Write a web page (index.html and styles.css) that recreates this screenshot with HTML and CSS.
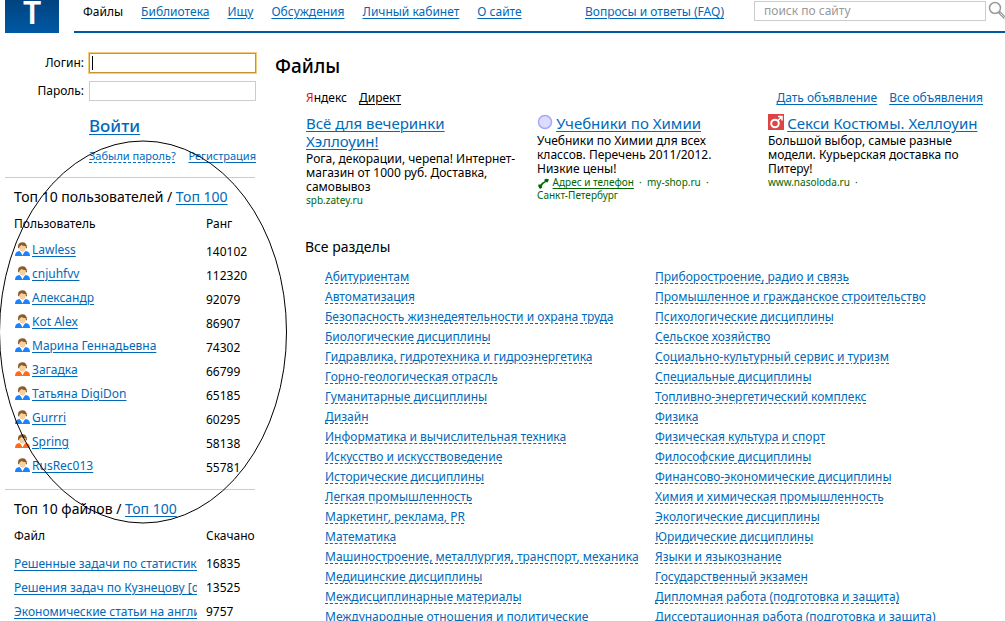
FILE: index.html
```html
<!DOCTYPE html>
<html lang="ru">
<head>
  <meta charset="UTF-8">
  <meta name="viewport" content="width=device-width, initial-scale=1.0">
  <title>Файлы</title>
  <link rel="stylesheet" href="styles.css">
</head>
<body>
  <svg class="sprite" aria-hidden="true">
    <symbol id="user" viewBox="0 0 15 14">
      <path d="M0 14 Q0 9.5 4.5 9 L7.5 12 L10.5 9 Q15 9.5 15 14 Z" fill="currentColor"/>
      <path d="M5 8.5 L7.5 13.5 L10 8.5 Z" fill="#fff"/>
      <path d="M4 4 Q4 9.5 7.5 9.8 Q11 9.5 11 4 L9.5 2.5 H5.5 Z" fill="#f6d09c"/>
      <path d="M3 6 Q2.5 0.3 7 0.2 Q12 0 12 6 L11 6.5 L10.5 4 Q8 4.5 6.5 2.8 Q6 4 4.5 4.5 L4 6.5 Z" fill="#8a5a2b"/>
    </symbol>
  </svg>

  <header class="header">
    <a class="logo" href="#">Т</a>
    <div class="topbar">
      <nav class="nav">
        <span class="current">Файлы</span>
        <a href="#">Библиотека</a>
        <a href="#">Ищу</a>
        <a href="#">Обсуждения</a>
        <a href="#">Личный кабинет</a>
        <a href="#">О сайте</a>
      </nav>
      <a class="faq" href="#">Вопросы и ответы (FAQ)</a>
      <form class="search">
        <input type="text" placeholder="поиск по сайту" aria-label="поиск по сайту">
        <button type="button" aria-label="Найти">
          <svg width="18" height="18" viewBox="0 0 18 18">
            <circle cx="7" cy="7" r="5.5" fill="#fff" stroke="#999" stroke-width="1.5"/>
            <path d="M11 11 L17 17" stroke="#999" stroke-width="3"/>
            <path d="M12 12 L17 17" stroke="#ddd" stroke-width="1"/>
          </svg>
        </button>
      </form>
    </div>
  </header>

  <div class="page">
    <aside class="sidebar">
      <form class="login">
        <label for="login">Логин:</label>
        <input type="text" id="login" class="active">
        <label for="password">Пароль:</label>
        <input type="password" id="password">
        <button type="button" class="enter">Войти</button>
        <div class="login-links">
          <a class="dashed" href="#">Забыли пароль?</a>
          <a href="#">Регистрация</a>
        </div>
      </form>

      <section class="top">
        <h2>Топ 10 пользователей / <a href="#">Топ 100</a></h2>
        <table class="users">
          <thead>
            <tr><th>Пользователь</th><th>Ранг</th></tr>
          </thead>
          <tbody>
            <tr><td><svg><use href="#user"/></svg><a href="#">Lawless</a></td><td>140102</td></tr>
            <tr><td><svg><use href="#user"/></svg><a href="#">cnjuhfvv</a></td><td>112320</td></tr>
            <tr><td><svg><use href="#user"/></svg><a href="#">Александр</a></td><td>92079</td></tr>
            <tr><td><svg><use href="#user"/></svg><a href="#">Kot Alex</a></td><td>86907</td></tr>
            <tr><td><svg><use href="#user"/></svg><a href="#">Марина Геннадьевна</a></td><td>74302</td></tr>
            <tr><td><svg class="orange"><use href="#user"/></svg><a href="#">Загадка</a></td><td>66799</td></tr>
            <tr><td><svg><use href="#user"/></svg><a href="#">Татьяна DigiDon</a></td><td>65185</td></tr>
            <tr><td><svg><use href="#user"/></svg><a href="#">Gurrri</a></td><td>60295</td></tr>
            <tr><td><svg class="orange"><use href="#user"/></svg><a href="#">Spring</a></td><td>58138</td></tr>
            <tr><td><svg><use href="#user"/></svg><a href="#">RusRec013</a></td><td>55781</td></tr>
          </tbody>
        </table>
      </section>

      <section class="top">
        <h2>Топ 10 файлов / <a href="#">Топ 100</a></h2>
        <table class="files">
          <thead>
            <tr><th>Файл</th><th>Скачано</th></tr>
          </thead>
          <tbody>
            <tr><td><a href="#">Решенные задачи по статистике</a></td><td>16835</td></tr>
            <tr><td><a href="#">Решения задач по Кузнецову [doc]</a></td><td>13525</td></tr>
            <tr><td><a href="#">Экономические статьи на англий</a></td><td>9757</td></tr>
          </tbody>
        </table>
      </section>

      <svg class="ellipse" viewBox="0 0 288 384" aria-hidden="true">
        <ellipse cx="144" cy="192" rx="143.500" ry="191" fill="none" stroke="#000" stroke-width="1"/>
      </svg>
    </aside>

    <main class="main">
      <h1>Файлы</h1>

      <section class="direct">
        <div class="direct-head">
          <span><span class="ya">Я</span>ндекс</span>
          <a class="black" href="#">Директ</a>
          <a class="give" href="#">Дать объявление</a>
          <a href="#">Все объявления</a>
        </div>
        <div class="ads">
          <div class="ad">
            <a class="ad-title" href="#">Всё для вечеринки<br>Хэллоуин!</a>
            <p>Рога, декорации, черепа! Интернет-<br>магазин от 1000 руб. Доставка,<br>самовывоз</p>
            <div class="domain">spb.zatey.ru</div>
          </div>
          <div class="ad">
            <svg class="favicon" width="16" height="16" viewBox="0 0 16 16"><circle cx="8" cy="8" r="6.5" fill="#dcdcff" stroke="#a8a8f8" stroke-width="1.5"/></svg>
            <a class="ad-title" href="#">Учебники по Химии</a>
            <p>Учебники по Химии для всех<br>классов. Перечень 2011/2012.<br>Низкие цены!</p>
            <div class="domain">
              <svg class="phone" width="13" height="11" viewBox="0 0 13 11"><path d="M3 11 Q0.5 8 1.5 6.5 L3.5 6.5 Q5 4 7.5 3.5 L7.500 1.500 Q9 0 12 1.500 L10.500 4.500 L9 4 Q6 5.500 4.800 8 L5.200 9.500 Z" fill="#006600"/></svg>
              <a href="#">Адрес и телефон</a> &nbsp;·&nbsp; my-shop.ru &nbsp;·<br>Санкт-Петербург
            </div>
          </div>
          <div class="ad">
            <svg class="favicon" width="16" height="16" viewBox="0 0 16 16"><rect width="16" height="16" fill="#dc4446"/><circle cx="7" cy="9.5" r="3.8" fill="none" stroke="#fff" stroke-width="2"/><path d="M9.5 7 L13.5 3 M10 2.5 H14 V6.5" fill="none" stroke="#fff" stroke-width="1.5"/></svg>
            <a class="ad-title" href="#">Секси Костюмы. Хеллоуин</a>
            <p>Большой выбор, самые разные<br>модели. Курьерская доставка по<br>Питеру!</p>
            <div class="domain">www.nasoloda.ru &nbsp;·</div>
          </div>
        </div>
      </section>

      <section class="sections">
        <h2>Все разделы</h2>
        <div class="columns">
          <ul>
            <li><a href="#">Абитуриентам</a></li>
            <li><a href="#">Автоматизация</a></li>
            <li><a href="#">Безопасность жизнедеятельности и охрана труда</a></li>
            <li><a href="#">Биологические дисциплины</a></li>
            <li><a href="#">Гидравлика, гидротехника и гидроэнергетика</a></li>
            <li><a href="#">Горно-геологическая отрасль</a></li>
            <li><a href="#">Гуманитарные дисциплины</a></li>
            <li><a href="#">Дизайн</a></li>
            <li><a href="#">Информатика и вычислительная техника</a></li>
            <li><a href="#">Искусство и искусствоведение</a></li>
            <li><a href="#">Исторические дисциплины</a></li>
            <li><a href="#">Легкая промышленность</a></li>
            <li><a href="#">Маркетинг, реклама, PR</a></li>
            <li><a href="#">Математика</a></li>
            <li><a href="#">Машиностроение, металлургия, транспорт, механика</a></li>
            <li><a href="#">Медицинские дисциплины</a></li>
            <li><a href="#">Междисциплинарные материалы</a></li>
            <li><a href="#">Международные отношения и политические</a></li>
          </ul>
          <ul>
            <li><a href="#">Приборостроение, радио и связь</a></li>
            <li><a href="#">Промышленное и гражданское строительство</a></li>
            <li><a href="#">Психологические дисциплины</a></li>
            <li><a href="#">Сельское хозяйство</a></li>
            <li><a href="#">Социально-культурный сервис и туризм</a></li>
            <li><a href="#">Специальные дисциплины</a></li>
            <li><a href="#">Топливно-энергетический комплекс</a></li>
            <li><a href="#">Физика</a></li>
            <li><a href="#">Физическая культура и спорт</a></li>
            <li><a href="#">Философские дисциплины</a></li>
            <li><a href="#">Финансово-экономические дисциплины</a></li>
            <li><a href="#">Химия и химическая промышленность</a></li>
            <li><a href="#">Экологические дисциплины</a></li>
            <li><a href="#">Юридические дисциплины</a></li>
            <li><a href="#">Языки и языкознание</a></li>
            <li><a href="#">Государственный экзамен</a></li>
            <li><a href="#">Дипломная работа (подготовка и защита)</a></li>
            <li><a href="#">Диссертационная работа (подготовка и защита)</a></li>
          </ul>
        </div>
      </section>
    </main>
  </div>
</body>
</html>
```
FILE: styles.css
```css
* {
  box-sizing: border-box;
}
body {
  display: flex;
  flex-direction: column;
  height: 100vh;
  margin: 0;
  overflow: hidden;
  border-bottom: 1px solid #ccc;
  background: #fff;
  color: #000;
  font-family: Tahoma, "Noto Sans", sans-serif;
  font-size: 12px;
  line-height: 20px;
}
a {
  color: #0069b9;
  text-decoration: underline;
  text-underline-offset: 2px;
  text-decoration-thickness: 1px;
}
h1, h2, p, ul {
  margin: 0;
  padding: 0;
  font-weight: normal;
}
input {
  height: 20px;
  border: 1px solid #ccc;
  padding: 0 4px;
  font: inherit;
}
button {
  border: none;
  padding: 0;
  background: none;
  cursor: pointer;
}
.sprite {
  display: none;
}

/* header */
.header {
  display: flex;
  flex: none;
  gap: 15px;
  padding-left: 5px;
}
.logo {
  width: 54px;
  height: 33px;
  overflow: hidden;
  background: linear-gradient(#00437f, #0059a5);
  color: #fff;
  font-size: 32px;
  font-weight: 600;
  line-height: 24px;
  text-align: center;
  text-decoration: none;
}
.topbar {
  display: flex;
  flex: 1;
  height: 33px;
  padding: 1px 0 0 9px;
  border-bottom: 2px solid #0057a3;
  white-space: nowrap;
}
.nav {
  display: flex;
  flex: 1;
  gap: 18px;
  line-height: 22px;
}
.faq {
  margin-right: 30px;
  line-height: 22px;
}
.search {
  display: flex;
  gap: 2px;
  align-items: flex-start;
}
.search input {
  width: 232px;
  padding-left: 9px;
}
.search input::placeholder {
  color: #999;
}
.search button {
  width: 17px;
  height: 18px;
}

/* columns */
.page {
  display: flex;
  flex: 1;
  min-height: 0;
  gap: 20px;
  padding-left: 5px;
}
.sidebar {
  position: relative;
  flex: none;
  width: 250px;
  padding-top: 20px;
}
.main {
  flex: 1;
  padding-top: 20px;
}

/* login */
.login {
  display: grid;
  grid-template-columns: 79px 167px;
  column-gap: 5px;
  row-gap: 8px;
  padding-bottom: 11px;
}
.login label {
  text-align: right;
}
.login input.active {
  border-color: #c9922e;
  outline: 1px solid #f3cd7c;
  /* text cursor */
  background: linear-gradient(#000, #000) no-repeat 2px 2px / 1px 14px;
}
.enter {
  grid-column: 2;
  justify-self: start;
  margin-top: 5px;
  color: #0069b9;
  font: 500 17px/24px Tahoma, "Noto Sans", sans-serif;
  text-decoration: underline;
  text-underline-offset: 2px;
}
.login-links {
  display: flex;
  grid-column: 2;
  justify-content: space-between;
  font-size: 11px;
  white-space: nowrap;
}
.login-links .dashed {
  text-decoration-style: dashed;
}

/* top lists */
.top {
  margin-bottom: 9px;
  border-top: 1px solid #ccc;
  padding: 9px 0 0 9px;
}
.top h2 {
  font-size: 14px;
  line-height: 20px;
  white-space: nowrap;
}
.top table {
  width: 100%;
  table-layout: fixed;
  border-collapse: collapse;
}
.top th, .top td {
  height: 24px;
  padding: 0;
  font-weight: normal;
  text-align: left;
  white-space: nowrap;
}
.top th {
  height: 33px;
}
.top th:last-child {
  width: 49px;
}
.users td:first-child {
  padding-bottom: 4px;
}
.users svg {
  width: 15px;
  height: 14px;
  margin: 0 2px 0 1px;
  color: #1a82ff;
  vertical-align: -2px;
}
.users .orange {
  color: #ff6a1a;
}
.files td a {
  display: block;
  width: 183px;
  overflow: hidden;
}
/* hand-drawn mark over the users list */
.ellipse {
  position: absolute;
  top: 107px;
  left: -6px;
  width: 288px;
  height: 384px;
  pointer-events: none;
}

/* ads */
.main h1 {
  font-size: 19px;
  font-weight: 500;
  line-height: 26px;
}
.direct {
  padding: 9px 22px 0 31px;
}
.direct-head {
  display: flex;
  gap: 12px;
}
.direct .black {
  color: #000;
}
.ya {
  color: #f00;
}
.give {
  margin-left: auto;
}
.ads {
  display: grid;
  grid-template-columns: repeat(3, 1fr);
  gap: 16px;
  margin-top: 6px;
}
.ad {
  min-width: 0;
  line-height: 14px;
  white-space: nowrap;
}
.ad p {
  margin-top: 2px;
}
.ad-title {
  font-size: 15px;
  line-height: 18px;
}
.favicon {
  vertical-align: -1px;
}
.domain {
  color: #006600;
  font-size: 10px;
  line-height: 12px;
}
.domain a {
  color: #006600;
}
.phone {
  vertical-align: -3px;
}

/* sections */
.sections {
  padding: 31px 0 0 30px;
}
.sections h2 {
  font-size: 14px;
  line-height: 20px;
}
.columns {
  display: grid;
  grid-template-columns: 1fr 1fr;
  padding: 10px 20px 0 20px;
}
.columns ul {
  min-width: 0;
  list-style: none;
  white-space: nowrap;
}
.columns a {
  text-decoration-style: dashed;
}
```
